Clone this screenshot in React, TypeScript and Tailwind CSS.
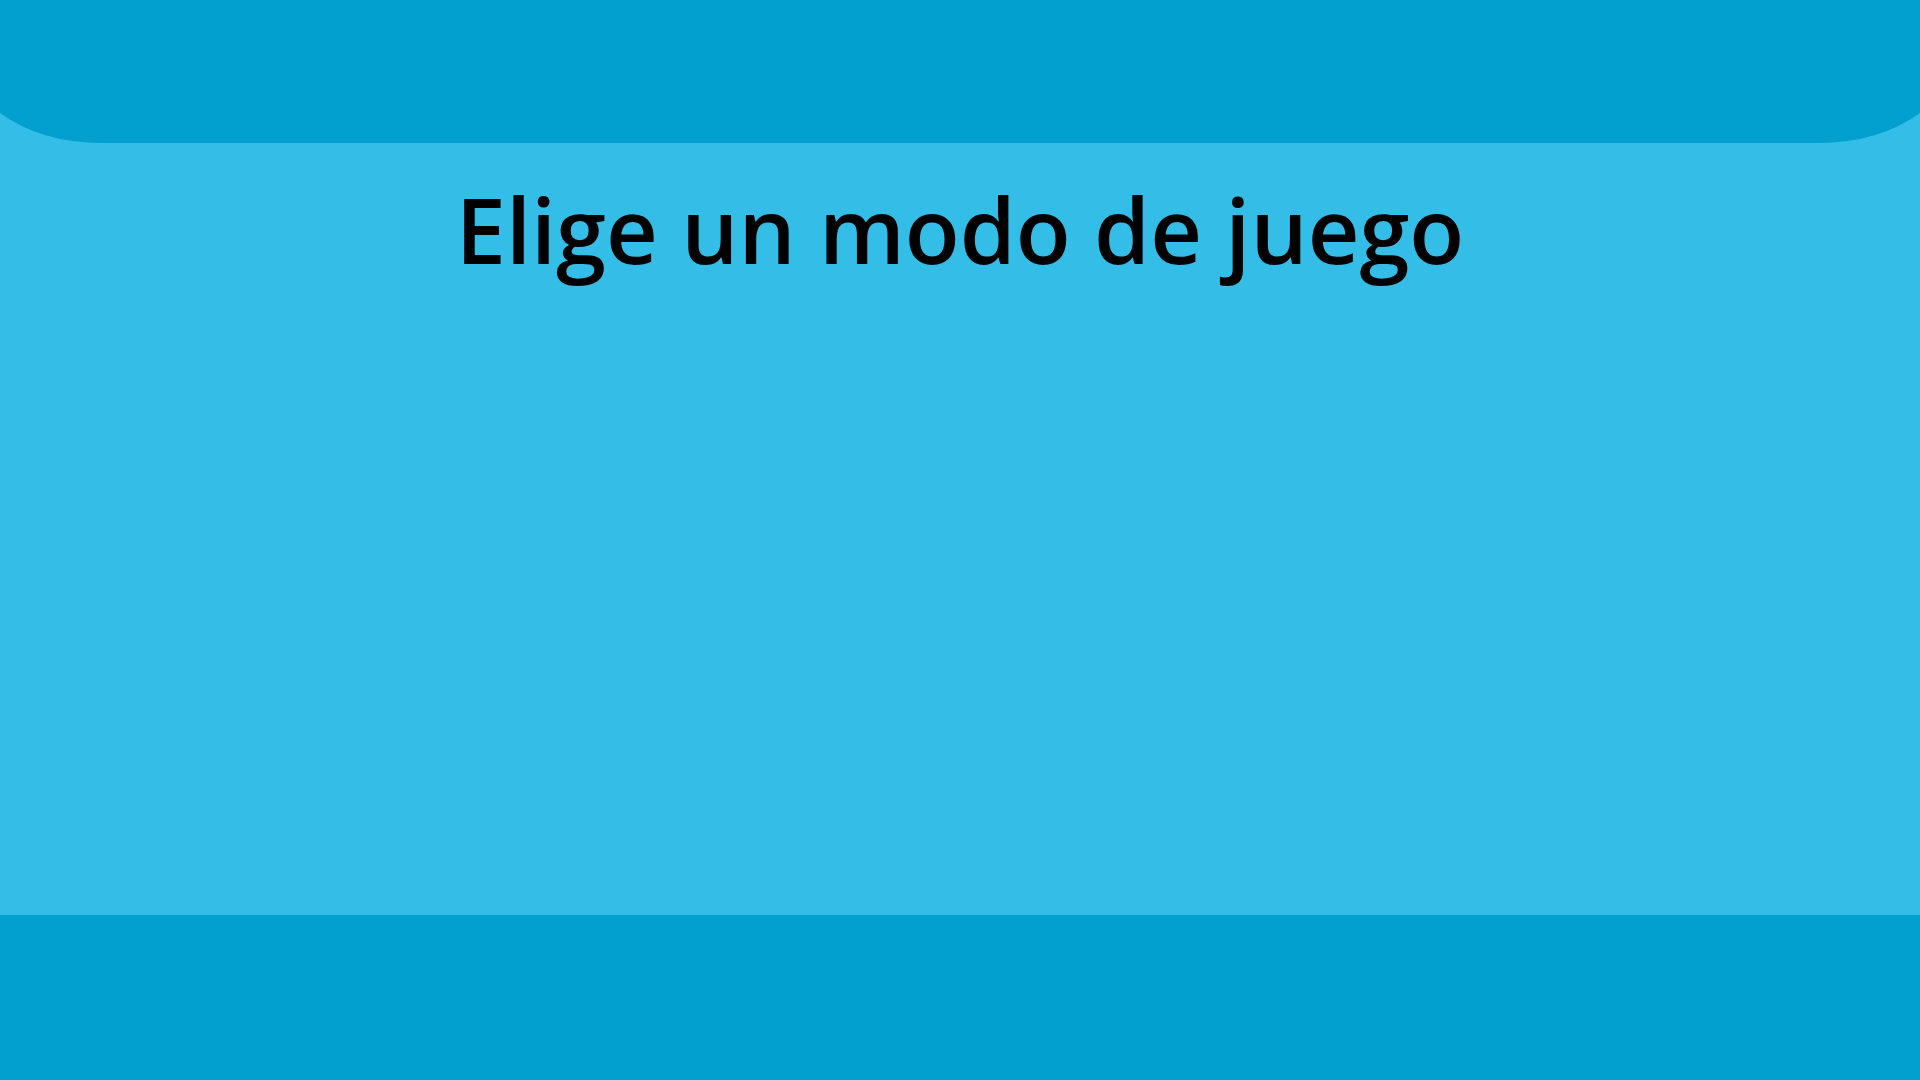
export default function App() {
  return (
    <div className="w-[1920px] h-[1080px] overflow-hidden flex flex-col bg-[#33bde7]">
      {/* Top band with rounded bottom corners */}
      <div className="h-[143px] shrink-0 -mx-[40px] bg-[#02a0cf] rounded-b-[140px_100px]" />

      {/* Main area */}
      <div className="flex-1 flex flex-col items-center">
        <h1
          className="mt-[26px] text-[90px] leading-[120px] font-semibold text-black tracking-[0px]"
          style={{ fontFamily: '"Open Sans", "Noto Sans", sans-serif' }}
        >
          Elige un modo de juego
        </h1>
      </div>

      {/* Bottom band */}
      <div className="h-[165px] shrink-0 bg-[#02a0cf]" />
    </div>
  )
}
